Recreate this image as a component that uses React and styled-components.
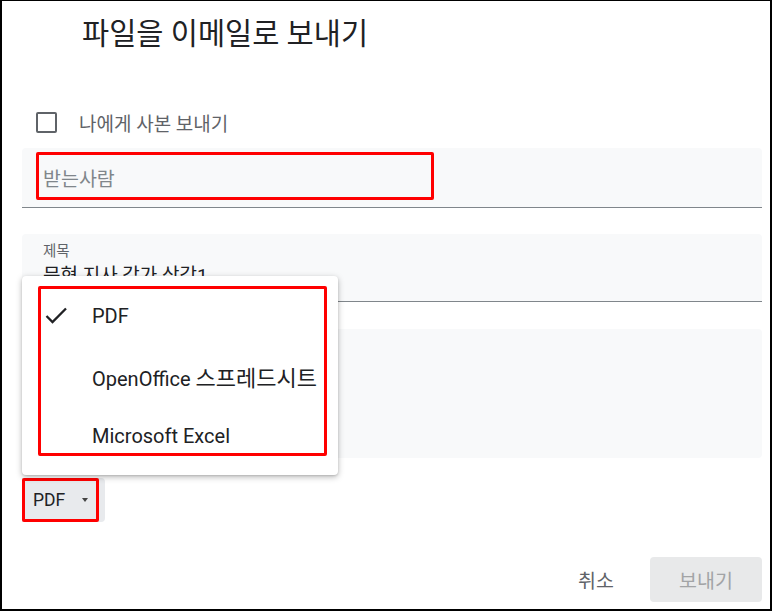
import React from 'react';
import styled, { createGlobalStyle } from 'styled-components';

const GlobalStyle = createGlobalStyle`
  html, body {
    margin: 0;
    padding: 0;
    background: #ffffff;
  }
  body {
    font-family: Roboto, "Noto Sans CJK KR", sans-serif;
    color: #202124;
  }
`;

const Frame = styled.div`
  position: relative;
  box-sizing: border-box;
  width: 772px;
  height: 611px;
  border: 2px solid #000;
  border-top-width: 1px;
  padding: 0 8px 7px 20px;
  display: flex;
  flex-direction: column;
  background: #fff;
`;

const Title = styled.h1`
  margin: 15px 0 0 60px;
  font-size: 29.5px;
  line-height: 36px;
  font-weight: 400;
  color: #202124;
`;

const CheckRow = styled.label`
  display: flex;
  align-items: center;
  height: 24px;
  margin: 58px 0 0 14px;
  gap: 22px;
  font-size: 19px;
  color: #5f6368;
`;

const CheckBox = styled.span`
  box-sizing: border-box;
  width: 21px;
  height: 21px;
  border: 2px solid #5f6368;
  border-radius: 2px;
`;

const Field = styled.div`
  box-sizing: border-box;
  margin-top: ${p => p.$top}px;
  height: ${p => p.$height}px;
  background: #f8f9fa;
  border-radius: ${p => (p.$underline ? '4px 4px 0 0' : '4px')};
  border-bottom: ${p => (p.$underline ? '1px solid #80868b' : 'none')};
  padding: ${p => p.$pad || '0'};
  display: flex;
  flex-direction: column;
`;

const Marked = styled.div`
  box-sizing: border-box;
  width: 398px;
  height: 48px;
  border: 3px solid #ff0000;
  border-radius: 2px;
  display: flex;
  align-items: center;
  padding: 3px 0 0 4px;
`;

const Placeholder = styled.span`
  font-size: 19.5px;
  color: #80868b;
`;

const FieldLabel = styled.span`
  font-size: 14.5px;
  line-height: 18px;
  color: #5f6368;
`;

const FieldValue = styled.span`
  font-size: 19px;
  line-height: 26px;
  margin-top: 2px;
  color: #202124;
`;

const FormatSelect = styled.div`
  margin-top: 20px;
  width: 83px;
  height: 44px;
  background: #e8eaed;
  border-radius: 0 4px 4px 0;
  display: flex;
`;

const FormatInner = styled.div`
  box-sizing: border-box;
  width: 77px;
  height: 44px;
  border: 3px solid #ff0000;
  border-radius: 2px;
  display: flex;
  align-items: center;
  justify-content: space-between;
  padding: 0 8px 0 8px;
  font-size: 17.5px;
  color: #202124;
`;

const Caret = styled.span`
  width: 0;
  height: 0;
  border-left: 3.5px solid transparent;
  border-right: 3.5px solid transparent;
  border-top: 4px solid #444;
  margin-top: -1px;
`;

const Footer = styled.div`
  margin-top: auto;
  display: flex;
  justify-content: flex-end;
  align-items: center;
  gap: 20px;
`;

const TextButton = styled.button`
  border: none;
  background: transparent;
  font-family: inherit;
  font-size: 19.5px;
  color: #5f6368;
  padding: 0 16px;
  height: 45px;
`;

const SendButton = styled.button`
  border: none;
  width: 112px;
  height: 45px;
  border-radius: 4px;
  background: #e8e9ea;
  font-family: inherit;
  font-size: 19.5px;
  color: #a2a4a6;
`;

const Menu = styled.div`
  position: absolute;
  left: 20px;
  top: 275px;
  width: 316px;
  box-sizing: border-box;
  padding: 10px 0 9px;
  background: #fff;
  border-radius: 4px;
  box-shadow: 0 2px 6px rgba(0, 0, 0, 0.28), 0 1px 2px rgba(0, 0, 0, 0.12);
`;

const MenuItem = styled.div`
  height: 60px;
  display: flex;
  align-items: center;
  padding-left: 22px;
  gap: 24px;
  font-size: 20px;
  color: #202124;
  white-space: nowrap;
`;

const Hangul = styled.span`
  font-size: 22px;
`;

const CheckSlot = styled.span`
  width: 24px;
  height: 24px;
  display: flex;
  align-items: center;
  justify-content: center;
`;

const MenuMark = styled.div`
  position: absolute;
  left: 16px;
  top: 10px;
  width: 289px;
  height: 170px;
  box-sizing: border-box;
  border: 3px solid #ff0000;
  border-radius: 2px;
  pointer-events: none;
`;

const formats = [
  { name: 'PDF' },
  { name: 'OpenOffice', kr: '스프레드시트' },
  { name: 'Microsoft Excel' },
];

function CheckIcon() {
  return (
    <svg width="24" height="24" viewBox="0 0 24 24">
      <polyline points="2.5,12 8.5,18 22,4.5" fill="none" stroke="#202124" strokeWidth="2.3" />
    </svg>
  );
}

export default function App() {
  return (
    <>
      <GlobalStyle />
      <Frame>
        <Title>파일을 이메일로 보내기</Title>

        <CheckRow>
          <CheckBox />
          나에게 사본 보내기
        </CheckRow>

        <Field $top={14} $height={60} $underline $pad="4px 0 0 14px">
          <Marked>
            <Placeholder>받는사람</Placeholder>
          </Marked>
        </Field>

        <Field $top={26} $height={68} $underline $pad="9px 0 0 21px">
          <FieldLabel>제목</FieldLabel>
          <FieldValue>문현 지사 감가 상각1</FieldValue>
        </Field>

        <Field $top={27} $height={129} />

        <FormatSelect>
          <FormatInner>
            PDF
            <Caret />
          </FormatInner>
        </FormatSelect>

        <Footer>
          <TextButton>취소</TextButton>
          <SendButton>보내기</SendButton>
        </Footer>

        <Menu>
          {formats.map((f, i) => (
            <MenuItem key={f.name}>
              <CheckSlot>{i === 0 && <CheckIcon />}</CheckSlot>
              <span>
                {f.name}
                {f.kr && <> <Hangul>{f.kr}</Hangul></>}
              </span>
            </MenuItem>
          ))}
          <MenuMark />
        </Menu>
      </Frame>
    </>
  );
}
